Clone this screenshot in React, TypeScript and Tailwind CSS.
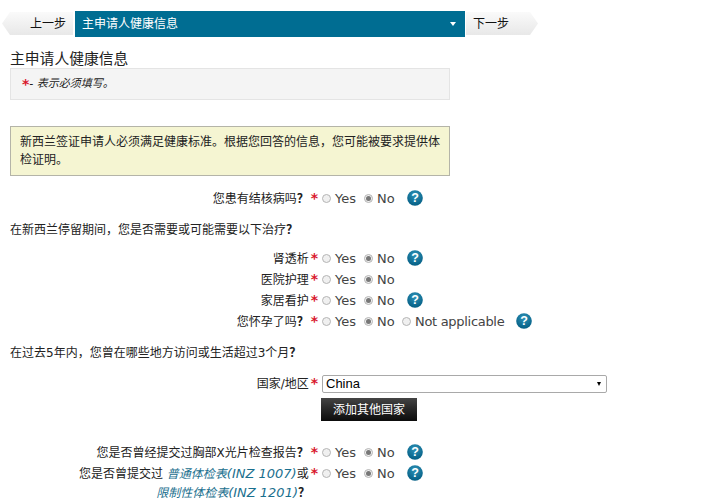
import React from "react";

const cjk = "font-['DejaVu_Sans','Noto_Sans_CJK_SC',sans-serif]";

const Star = () => <span className="ml-[2px] text-[#d9182d] font-bold text-[14px] leading-none">*</span>;
const Q = () => <span className="font-['Noto_Sans_CJK_SC',sans-serif] font-bold">？</span>;

const Radio = ({ checked }: { checked?: boolean }) => (
  <span className="w-[9px] h-[9px] rounded-full border border-[#b5b5b5] bg-[#f0f0f0] flex items-center justify-center shrink-0">
    {checked && <span className="w-[5px] h-[5px] rounded-full bg-[#777]" />}
  </span>
);

const Help = () => (
  <svg width="16" height="16" viewBox="0 0 16 16" className="shrink-0 block">
    <defs>
      <radialGradient id="helpBg" cx="50%" cy="30%" r="75%">
        <stop offset="0%" stopColor="#2f93b8" />
        <stop offset="100%" stopColor="#005a80" />
      </radialGradient>
    </defs>
    <circle cx="8" cy="8" r="7.8" fill="url(#helpBg)" />
    <text x="8" y="12.4" textAnchor="middle" fontSize="12.5" fontWeight="700" fill="#fff" fontFamily="Liberation Sans, sans-serif">?</text>
  </svg>
);

const Options = ({ help, extra }: { help?: boolean; extra?: boolean }) => (
  <div className="flex items-center h-[21px] text-[13px] text-[#444]">
    <span className="ml-[3px]"><Radio /></span>
    <span className="ml-1 w-[29px]">Yes</span>
    <Radio checked />
    <span className="ml-1 w-[24px]">No</span>
    {extra && (
      <>
        <span className="ml-px"><Radio /></span>
        <span className="ml-1 w-[95px] whitespace-nowrap tracking-[-0.3px]">Not applicable</span>
      </>
    )}
    {help && (
      <span className="ml-[6px] -mt-px"><Help /></span>
    )}
  </div>
);

interface RowProps {
  label: React.ReactNode;
  help?: boolean;
  extra?: boolean;
  className?: string;
}

const Row = ({ label, help, extra, className }: RowProps) => (
  <div className={`flex items-center h-[21px] ${className ?? ""}`}>
    <div className="w-[319px] shrink-0 text-right pr-px text-[12px] text-[#222]">{label}</div>
    <Options help={help} extra={extra} />
  </div>
);

const App = () => {
  return (
    <div className={`w-[706px] h-[500px] overflow-hidden bg-white ${cjk}`}>
      {/* Top nav */}
      <div className="flex items-start pt-[11px] h-[37px]">
        <div className="ml-[2px] mt-px w-[71px] h-[23px] bg-gradient-to-b from-[#fafafa] to-[#e8e8e8] [clip-path:polygon(0_50%,8px_0,100%_0,100%_100%,8px_100%)] flex items-center justify-center pl-[21px] text-[12px] text-[#111]">
          上一步
        </div>
        <div className="ml-[2px] w-[390px] h-[26px] bg-[#006d92] text-white text-[12px] flex items-center justify-between pl-[7px] pr-[9px]">
          <span>主申请人健康信息</span>
          <span className="w-0 h-0 border-x-[3px] border-x-transparent border-t-[4px] border-t-white" />
        </div>
        <div className="ml-px mt-px w-[72px] h-[23px] bg-gradient-to-b from-[#fafafa] to-[#e8e8e8] [clip-path:polygon(0_0,calc(100%-8px)_0,100%_50%,calc(100%-8px)_100%,0_100%)] flex items-center pl-[7px] text-[12px] text-[#111]">
          下一步
        </div>
      </div>

      <div className="pl-[10px] pt-[13px]">
        <h2 className="text-[14.8px] leading-[17px] text-[#222] font-normal">主申请人健康信息</h2>
        <div className="mt-px w-[440px] h-[32px] bg-[#f4f4f4] border border-[#e4e4e4] flex items-center pl-[11px] text-[11px] italic text-[#222]">
          <span className="text-[#d9182d] font-bold not-italic text-[14px]">*</span>
          <span>- 表示必须填写。</span>
        </div>

        <div className="mt-[26px] w-[440px] h-[50px] bg-[#f5f5d2] border border-[#b4b4a8] px-[9px] py-[6px] text-[12px] leading-[18px] text-[#222]">
          新西兰签证申请人必须满足健康标准。根据您回答的信息，您可能被要求提供体检证明。
        </div>
      </div>

      <Row className="mt-[12px]" label={<>您患有结核病吗<Q /><Star /></>} help />
      <p className="pl-[10px] mt-[9px] h-[21px] leading-[21px] text-[12px] text-[#222]">在新西兰停留期间，您是否需要或可能需要以下治疗<Q /></p>

      <Row className="mt-[9px]" label={<>肾透析<Star /></>} help />
      <Row label={<>医院护理<Star /></>} />
      <Row label={<>家居看护<Star /></>} help />
      <Row label={<>您怀孕了吗<Q /><Star /></>} extra help />

      <p className="pl-[10px] mt-[9px] h-[21px] leading-[21px] text-[12px] text-[#222]">在过去5年内，您曾在哪些地方访问或生活超过3个月<Q /></p>

      <div className="flex items-center mt-[11px] h-[21px]">
        <div className="w-[319px] shrink-0 text-right pr-px text-[12px] text-[#222]">国家/地区<Star /></div>
        <div className="ml-[3px] w-[285px] h-[18px] border border-[#a9a9a9] rounded-[2px] bg-white flex items-center justify-between pl-[3px] pr-[5px] font-['Liberation_Sans',sans-serif] text-[13px] text-black">
          <span>China</span>
          <span className="w-0 h-0 border-x-[2.5px] border-x-transparent border-t-[4px] border-t-black" />
        </div>
      </div>
      <div className="pl-[321px] mt-[4px]">
        <div className="w-[96px] h-[23px] bg-gradient-to-b from-[#444] to-[#0c0c0c] text-white text-[12px] flex items-center justify-center">添加其他国家</div>
      </div>

      <Row className="mt-[21px]" label={<>您是否曾经提交过胸部X光片检查报告<Q /><Star /></>} help />
      <div className="flex items-start">
        <div className="w-[319px] shrink-0 text-right pr-px text-[12px] leading-[17px] pt-[2px] text-[#222]">
          您是否曾提交过 <span className="italic text-[#1a6f8e]">普通体检表<span className="text-[13px]">(INZ 1007)</span></span>或<Star />
          <br />
          <span className="italic text-[#1a6f8e]">限制性体检表<span className="text-[13px]">(INZ 1201)</span></span><Q /><span className="inline-block w-[8px]" />
        </div>
        <Options help />
      </div>
    </div>
  );
};

export default App;
